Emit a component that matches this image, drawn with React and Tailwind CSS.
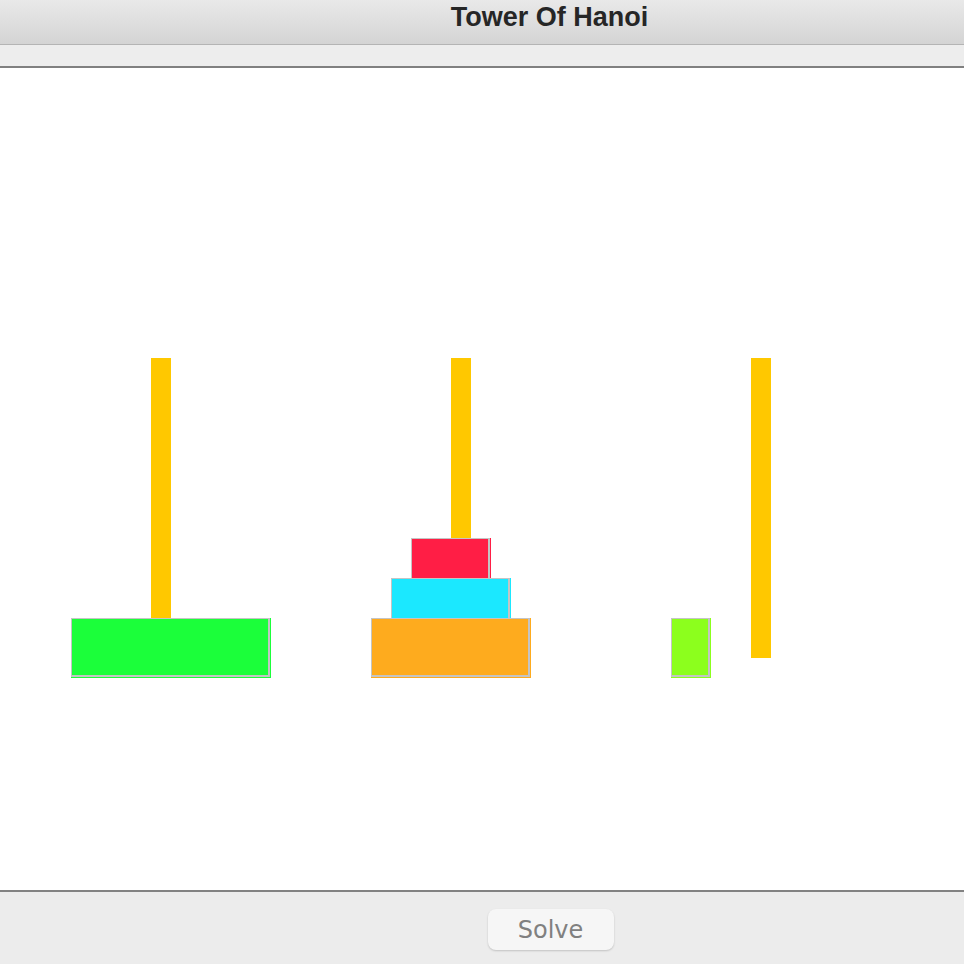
const poles = [
  { left: 151, top: 290, height: 260 },
  { left: 451, top: 290, height: 180 },
  { left: 751, top: 290, height: 300 },
];

// drawn in order: upper disks first, lower disks paint over them
const disks = [
  { left: 71, top: 550, width: 200, color: 'bg-[#1bff3a]' },
  { left: 411, top: 470, width: 80, color: 'bg-[#ff1e45]' },
  { left: 391, top: 510, width: 120, color: 'bg-[#1be8ff]' },
  { left: 371, top: 550, width: 160, color: 'bg-[#feab1e]' },
  { left: 671, top: 550, width: 40, color: 'bg-[#8cff1d]' },
];

function Disk({ left, top, width, color }) {
  return (
    <div className={`absolute h-[60px] ${color}`} style={{ left, top, width }}>
      <div
        className="absolute left-0 top-0 h-[59px] border-t border-l border-r-2 border-b-2 border-[#c4c4c4]"
        style={{ width: width - 1 }}
      />
    </div>
  );
}

export default function App() {
  return (
    <div className="flex h-[964px] w-[964px] flex-col overflow-hidden bg-white font-['Liberation_Sans',sans-serif]">
      <div className="flex h-[45px] shrink-0 items-start justify-center border-b border-[#b4b4b4] bg-gradient-to-b from-[#e9e9e9] to-[#d4d4d4] pl-[135px] pt-[4px]">
        <span className="text-[27px] font-bold leading-none text-[#262626]">Tower Of Hanoi</span>
      </div>
      <div className="h-[23px] shrink-0 border-b-2 border-[#808080] bg-[#ededed]" />
      <div className="relative h-[822px] shrink-0 bg-white">
        {poles.map((p) => (
          <div
            key={p.left}
            className="absolute w-[20px] bg-[#ffc800]"
            style={{ left: p.left, top: p.top, height: p.height }}
          />
        ))}
        {disks.map((d) => (
          <Disk key={d.left} {...d} />
        ))}
      </div>
      <div className="flex flex-1 items-start justify-center border-t-2 border-[#828282] bg-[#ececec] pl-[137px] pt-[17px]">
        <button className="flex h-[41px] w-[126px] items-center justify-center rounded-[8px] bg-[#f6f6f6] font-['DejaVu_Sans',sans-serif] text-[24px] leading-none text-[#808080] shadow-[0_1px_2px_rgba(0,0,0,0.18)]">
          Solve
        </button>
      </div>
    </div>
  );
}
